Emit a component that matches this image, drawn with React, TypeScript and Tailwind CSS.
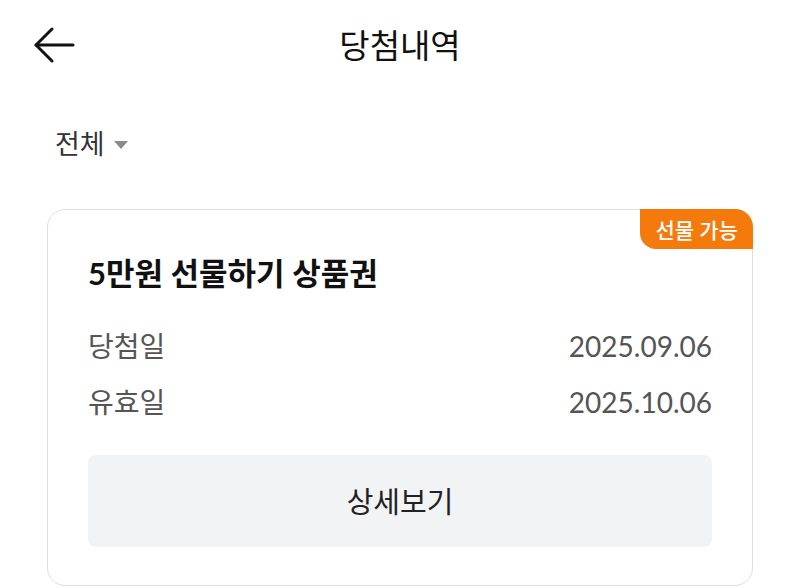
export default function App() {
  const rows = [
    { label: "당첨일", value: "2025.09.06" },
    { label: "유효일", value: "2025.10.06" },
  ];

  return (
    <div className="flex h-[588px] w-[800px] flex-col overflow-hidden bg-white font-['Lato','Noto_Sans_CJK_KR',sans-serif]">
      <header className="relative flex h-[90px] items-center justify-center">
        <button className="absolute left-[33px] top-[26px] p-0">
          <svg width="42" height="38" viewBox="0 0 42 38" fill="none" stroke="#111" strokeWidth="3" strokeLinecap="round" strokeLinejoin="round">
            <path d="M40 19H3" />
            <path d="M19 3L3 19l16 16" />
          </svg>
        </button>
        <h1 className="text-[33px] font-normal leading-none text-[#111]">당첨내역</h1>
      </header>

      <div className="mt-[40px] flex items-center pl-[55px]">
        <span className="text-[27px] leading-none text-[#333]">전체</span>
        <span className="ml-[9px] mt-[2px] h-0 w-0 border-x-[7px] border-t-[8px] border-x-transparent border-t-[#8a8a8a]" />
      </div>

      <div className="relative mx-[47px] mt-[52px] rounded-[18px] border border-[#dedede] px-[40px] pb-[38px] pt-[48px]">
        <span className="absolute -right-px -top-px flex h-[40px] items-center rounded-bl-[16px] rounded-tr-[18px] bg-[#f57a0c] px-[15px] text-[21px] font-medium leading-none text-white">
          선물 가능
        </span>
        <h2 className="text-[31px] font-bold leading-none text-[#111]">5만원 선물하기 상품권</h2>

        <div className="mt-[43px] flex flex-col gap-[28px]">
          {rows.map((row) => (
            <div key={row.label} className="flex items-center justify-between leading-none">
              <span className="text-[28px] text-[#555]">{row.label}</span>
              <span className="text-[28px] text-[#555]">{row.value}</span>
            </div>
          ))}
        </div>

        <button className="mt-[39px] flex h-[92px] w-full items-center justify-center rounded-[8px] bg-[#f2f3f5] text-[29px] leading-none text-[#222]">
          상세보기
        </button>
      </div>
    </div>
  );
}
